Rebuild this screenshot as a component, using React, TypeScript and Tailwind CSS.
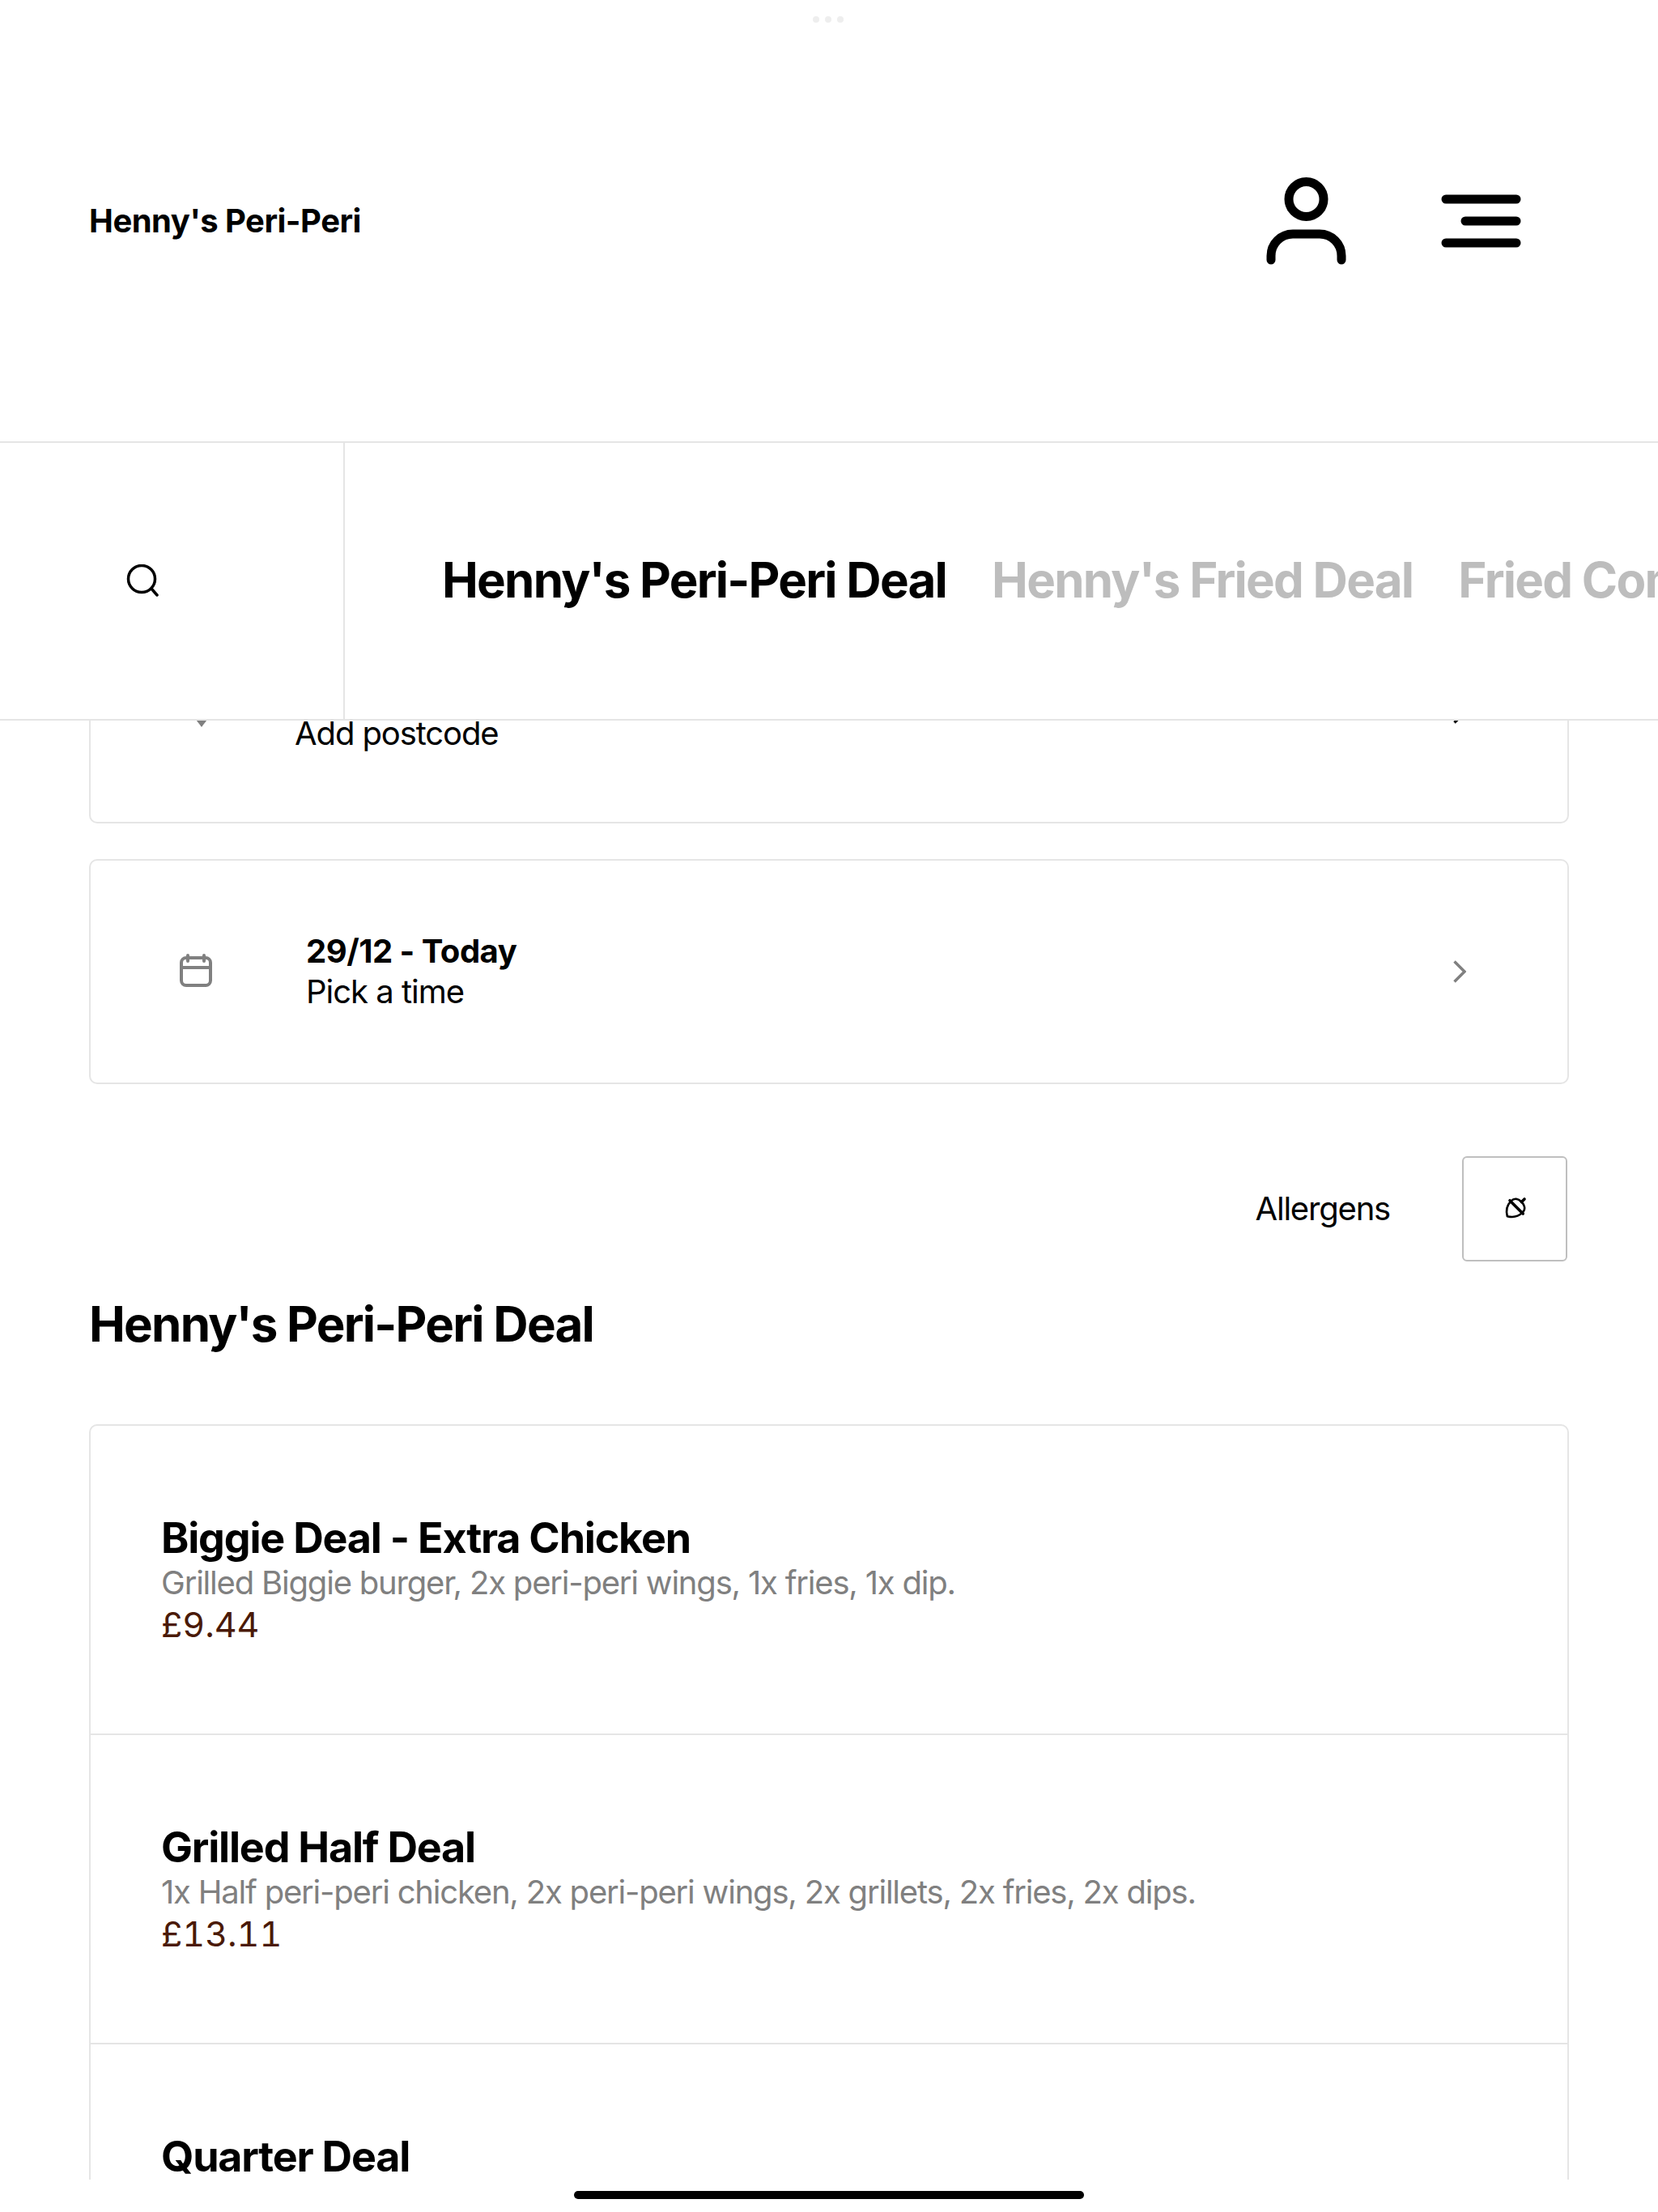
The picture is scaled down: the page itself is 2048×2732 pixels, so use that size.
const items = [
  { name: "Biggie Deal - Extra Chicken", desc: "Grilled Biggie burger, 2x peri-peri wings, 1x fries, 1x dip.", price: "£9.44" },
  { name: "Grilled Half Deal", desc: "1x Half peri-peri chicken, 2x peri-peri wings, 2x grillets, 2x fries, 2x dips.", price: "£13.11" },
];

function UserIcon() {
  return (
    <svg width="110" height="120" viewBox="0 0 110 120" fill="none" stroke="#000" strokeWidth="11" strokeLinecap="round">
      <circle cx="55.5" cy="33" r="21.5" />
      <path d="M12 108v-5a27 27 0 0 1 27-27h33a27 27 0 0 1 27 27v5" />
    </svg>
  );
}

function MenuIcon() {
  return (
    <svg width="99" height="120" viewBox="0 0 99 120" fill="none" stroke="#000" strokeWidth="11" strokeLinecap="round">
      <path d="M6 33h87M30 60h63M6 87h87" />
    </svg>
  );
}

function Chevron({ color }: { color: string }) {
  return (
    <svg width="16" height="28" viewBox="0 0 16 28" fill="none" stroke={color} strokeWidth="3.5">
      <path d="M1.5 1.5 14 14 1.5 26.5" />
    </svg>
  );
}

function AcornIcon() {
  return (
    <svg width="34" height="34" viewBox="0 0 34 34" fill="none" stroke="#000" strokeWidth="2.6" strokeLinecap="round" strokeLinejoin="round">
      <g transform="rotate(45 17 17)">
        <path d="M17 0v5" strokeWidth="3.6" />
        <path d="M7 13c0-5 4-8 10-8s10 3 10 8" />
        <path d="M5.5 14h23" strokeWidth="3.6" />
        <path d="M7 14c0 8 5 13 10 16 5-3 10-8 10-16" />
      </g>
    </svg>
  );
}

export default function App() {
  return (
    <div className="relative flex h-[2732px] w-[2048px] flex-col overflow-hidden bg-white font-['Inter',sans-serif] text-black">
      <div className="absolute left-[1004px] top-[20px] flex gap-[7px]">
        <div className="h-[8px] w-[8px] rounded-full bg-[#eeeeee]" />
        <div className="h-[8px] w-[8px] rounded-full bg-[#eeeeee]" />
        <div className="h-[8px] w-[8px] rounded-full bg-[#eeeeee]" />
      </div>

      <header className="flex h-[545px] shrink-0 items-center justify-between pl-[110px] pr-[169px]">
        <span className="text-[40px] font-bold tracking-[-0.5px]">Henny's Peri-Peri</span>
        <div className="flex items-center gap-[112px]">
          <UserIcon />
          <MenuIcon />
        </div>
      </header>

      <nav className="z-10 flex h-[345px] shrink-0 border-y-2 border-[#e5e5e5] bg-white">
        <div className="flex w-[426px] shrink-0 items-center border-r-2 border-[#e5e5e5] pb-[2px] pl-[156px]">
          <svg width="40" height="40" viewBox="0 0 40 40" fill="none" stroke="#000" strokeWidth="3.5" strokeLinecap="round">
            <circle cx="19" cy="18" r="16.5" />
            <path d="m31 30 7 8" />
          </svg>
        </div>
        <div className="flex items-center gap-[56px] overflow-hidden whitespace-nowrap pb-[4px] pl-[120px] text-[60px] font-bold tracking-[-1.75px]">
          <span>Henny's Peri-Peri Deal</span>
          <span className="text-[#bdbdbd]">Henny's Fried Deal</span>
          <span className="text-[#bdbdbd]">Fried Combos</span>
        </div>
      </nav>

      <main className="min-h-0 flex-1 overflow-hidden px-[110px]">
        <section className="-mt-[151px] flex h-[278px] items-center rounded-[10px] border-2 border-[#e5e5e5] pl-[121px] pr-[125px]">
          <svg width="32" height="44" viewBox="0 0 32 44" fill="#808080" className="mb-[4px]">
            <path d="M16 0C7 0 0 7 0 16c0 9 11 21 16 28 5-7 16-19 16-28C32 7 25 0 16 0Z" />
          </svg>
          <div className="ml-[99px] flex-1 pt-[6px]">
            <div className="h-[50px]" />
            <div className="text-[40px] leading-[50px] tracking-[-1.1px]">Add postcode</div>
          </div>
          <div className="mt-[4px]">
            <Chevron color="#111111" />
          </div>
        </section>

        <section className="mt-[44px] flex h-[278px] items-center rounded-[10px] border-2 border-[#e5e5e5] pl-[110px] pr-[125px]">
          <svg width="40" height="41" viewBox="0 0 40 41" fill="none" stroke="#808080" strokeWidth="4" strokeLinecap="round" className="mb-[4px]">
            <rect x="2" y="5" width="36" height="34" rx="6" />
            <path d="M2 17h36M10 2v7M30 2v7" />
          </svg>
          <div className="ml-[116px] flex-1">
            <div className="text-[40px] font-bold leading-[50px] tracking-[-0.5px]">29/12 - Today</div>
            <div className="text-[40px] leading-[50px] tracking-[-1px]">Pick a time</div>
          </div>
          <Chevron color="#808080" />
        </section>

        <div className="mr-[2px] mt-[89px] flex items-center justify-end gap-[89px]">
          <span className="text-[40px] tracking-[-1.2px]">Allergens</span>
          <button className="flex h-[130px] w-[130px] items-center justify-center rounded-[6px] border-2 border-[#bfbfbf]">
            <AcornIcon />
          </button>
        </div>

        <h1 className="mt-[42px] text-[60px] font-bold leading-[70px] tracking-[-1.75px]">Henny's Peri-Peri Deal</h1>

        <section className="mt-[89px] rounded-[10px] border-2 border-[#e5e5e5]">
          {items.map((item) => (
            <article key={item.name} className="flex h-[382px] flex-col justify-center border-b-2 border-[#e5e5e5] pl-[87px]">
              <h2 className="text-[52px] font-bold leading-[60px] tracking-[-1.2px]">{item.name}</h2>
              <p className="text-[40px] leading-[50px] tracking-[-1.2px] text-[#808080]">{item.desc}</p>
              <p className="text-[43px] leading-[52px] tabular-nums text-[#4a1a08]">{item.price}</p>
            </article>
          ))}
          <article className="h-[382px] pl-[87px] pt-[109px]">
            <h2 className="text-[52px] font-bold leading-[60px] tracking-[-1.2px]">Quarter Deal</h2>
          </article>
        </section>
      </main>

      <footer className="flex h-[40px] shrink-0 justify-center pt-[14px]">
        <div className="h-[10px] w-[630px] rounded-full bg-black" />
      </footer>
    </div>
  );
}
